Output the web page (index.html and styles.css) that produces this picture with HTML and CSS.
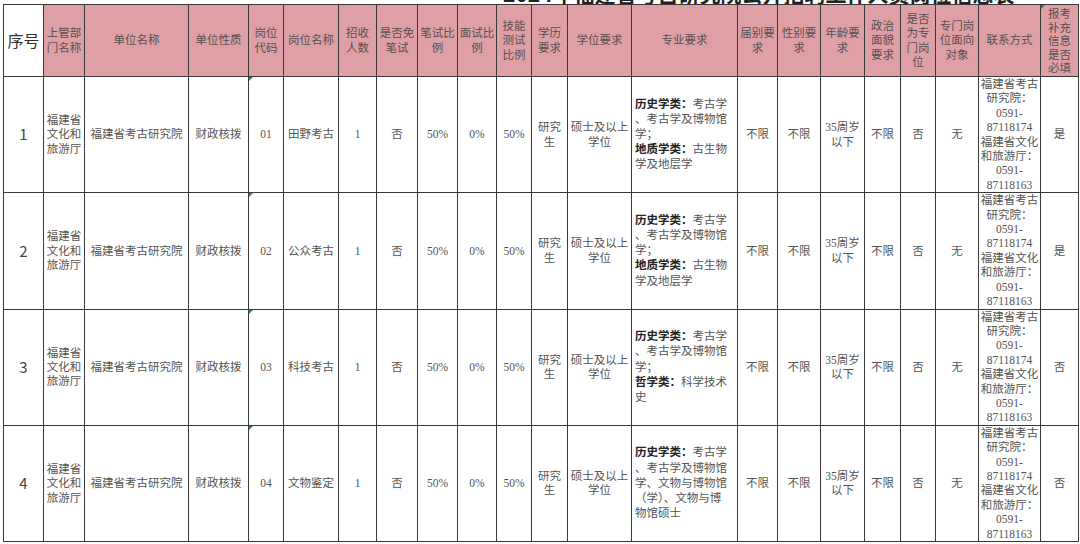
FILE: index.html
```html
<!DOCTYPE html>
<html lang="zh-CN">
<head>
<meta charset="utf-8">
<title>岗位信息表</title>
<link rel="stylesheet" href="styles.css">
</head>
<body>
<div class="sheet">
  <div class="title-strip"><div class="title">2024年福建省考古研究院公开招聘工作人员岗位信息表</div></div>
  <table class="jobs">
    <colgroup>
      <col class="c1"><col class="c2"><col class="c3"><col class="c4"><col class="c5"><col class="c6"><col class="c7"><col class="c8"><col class="c9"><col class="c10"><col class="c11"><col class="c12"><col class="c13"><col class="c14"><col class="c15"><col class="c16"><col class="c17"><col class="c18"><col class="c19"><col class="c20"><col class="c21"><col class="c22">
    </colgroup>
    <thead>
      <tr>
        <th class="idx-head">序号</th>
        <th>上管部<br>门名称</th>
        <th>单位名称</th>
        <th>单位性质</th>
        <th>岗位<br>代码</th>
        <th>岗位名称</th>
        <th>招收<br>人数</th>
        <th>是否免<br>笔试</th>
        <th>笔试比<br>例</th>
        <th>面试比<br>例</th>
        <th>技能<br>测试<br>比例</th>
        <th>学历<br>要求</th>
        <th>学位要求</th>
        <th>专业要求</th>
        <th>届别要<br>求</th>
        <th>性别要<br>求</th>
        <th>年龄要<br>求</th>
        <th>政治<br>面貌<br>要求</th>
        <th>是否<br>为专<br>门岗<br>位</th>
        <th>专门岗<br>位面向<br>对象</th>
        <th>联系方式</th>
        <th class="flag tall">报考<br>补充<br>信息<br>是否<br>必填</th>
      </tr>
    </thead>
    <tbody>
      <tr>
        <td class="idx">1</td>
        <td>福建省<br>文化和<br>旅游厅</td>
        <td>福建省考古研究院</td>
        <td>财政核拨</td>
        <td class="flag">01</td>
        <td>田野考古</td>
        <td>1</td>
        <td>否</td>
        <td>50%</td>
        <td>0%</td>
        <td>50%</td>
        <td>研究<br>生</td>
        <td>硕士及以上<br>学位</td>
        <td class="major"><b>历史学类：</b>考古学<br>、考古学及博物馆<br>学；<br><b>地质学类：</b>古生物<br>学及地层学</td>
        <td>不限</td>
        <td>不限</td>
        <td>35周岁<br>以下</td>
        <td>不限</td>
        <td>否</td>
        <td>无</td>
        <td class="contact">福建省考古<br>研究院：<br>0591-<br>87118174<br>福建省文化<br>和旅游厅：<br>0591-<br>87118163</td>
        <td>是</td>
      </tr>
      <tr>
        <td class="idx">2</td>
        <td>福建省<br>文化和<br>旅游厅</td>
        <td>福建省考古研究院</td>
        <td>财政核拨</td>
        <td class="flag">02</td>
        <td>公众考古</td>
        <td>1</td>
        <td>否</td>
        <td>50%</td>
        <td>0%</td>
        <td>50%</td>
        <td>研究<br>生</td>
        <td>硕士及以上<br>学位</td>
        <td class="major"><b>历史学类：</b>考古学<br>、考古学及博物馆<br>学；<br><b>地质学类：</b>古生物<br>学及地层学</td>
        <td>不限</td>
        <td>不限</td>
        <td>35周岁<br>以下</td>
        <td>不限</td>
        <td>否</td>
        <td>无</td>
        <td class="contact">福建省考古<br>研究院：<br>0591-<br>87118174<br>福建省文化<br>和旅游厅：<br>0591-<br>87118163</td>
        <td>是</td>
      </tr>
      <tr>
        <td class="idx">3</td>
        <td>福建省<br>文化和<br>旅游厅</td>
        <td>福建省考古研究院</td>
        <td>财政核拨</td>
        <td class="flag">03</td>
        <td>科技考古</td>
        <td>1</td>
        <td>否</td>
        <td>50%</td>
        <td>0%</td>
        <td>50%</td>
        <td>研究<br>生</td>
        <td>硕士及以上<br>学位</td>
        <td class="major"><b>历史学类：</b>考古学<br>、考古学及博物馆<br>学；<br><b>哲学类：</b>科学技术<br>史</td>
        <td>不限</td>
        <td>不限</td>
        <td>35周岁<br>以下</td>
        <td>不限</td>
        <td>否</td>
        <td>无</td>
        <td class="contact">福建省考古<br>研究院：<br>0591-<br>87118174<br>福建省文化<br>和旅游厅：<br>0591-<br>87118163</td>
        <td>否</td>
      </tr>
      <tr>
        <td class="idx">4</td>
        <td>福建省<br>文化和<br>旅游厅</td>
        <td>福建省考古研究院</td>
        <td>财政核拨</td>
        <td class="flag">04</td>
        <td>文物鉴定</td>
        <td>1</td>
        <td>否</td>
        <td>50%</td>
        <td>0%</td>
        <td>50%</td>
        <td>研究<br>生</td>
        <td>硕士及以上<br>学位</td>
        <td class="major"><b>历史学类：</b>考古学<br>、考古学及博物馆<br>学、文物与博物馆<br>（学）、文物与博<br>物馆硕士</td>
        <td>不限</td>
        <td>不限</td>
        <td>35周岁<br>以下</td>
        <td>不限</td>
        <td>否</td>
        <td>无</td>
        <td class="contact">福建省考古<br>研究院：<br>0591-<br>87118174<br>福建省文化<br>和旅游厅：<br>0591-<br>87118163</td>
        <td>否</td>
      </tr>
    </tbody>
  </table>
</div>
</body>
</html>
```

FILE: styles.css
```css
html, body {
  margin: 0;
  padding: 0;
  background: #ffffff;
}

.sheet {
  padding-left: 3px;
  width: 1075px;
}

.title-strip {
  height: 4px;
  overflow: hidden;
  padding-left: 500px;
}

.title {
  font-family: "Noto Sans CJK SC", sans-serif;
  font-weight: 700;
  font-size: 21px;
  line-height: 24px;
  margin-top: -19px;
  color: #222;
  white-space: nowrap;
}

.jobs {
  border-collapse: collapse;
  table-layout: fixed;
  width: 1075px;
  font-family: "Liberation Serif", "Noto Sans CJK SC", serif;
  font-size: 11.5px;
  line-height: 14.4px;
  color: #555;
}

.c1 { width: 40px; }
.c2 { width: 41px; }
.c3 { width: 104px; }
.c4 { width: 60px; }
.c5 { width: 35px; }
.c6 { width: 55px; }
.c7 { width: 38px; }
.c8 { width: 41px; }
.c9 { width: 40px; }
.c10 { width: 39px; }
.c11 { width: 35px; }
.c12 { width: 36px; }
.c13 { width: 64px; }
.c14 { width: 106px; }
.c15 { width: 40px; }
.c16 { width: 43px; }
.c17 { width: 44px; }
.c18 { width: 36px; }
.c19 { width: 35px; }
.c20 { width: 43px; }
.c21 { width: 62px; }
.c22 { width: 38px; }

.jobs th,
.jobs td {
  border: 1px solid #3a3a3a;
  padding: 0 1px;
  text-align: center;
  vertical-align: middle;
  white-space: nowrap;
  overflow: hidden;
  position: relative;
}

.jobs thead tr {
  height: 72px;
}

.jobs th {
  background: #dea0a5;
  font-weight: 400;
  color: #5a4f50;
  line-height: 14.5px;
}

.jobs th.tall {
  line-height: 13.6px;
  vertical-align: top;
  padding-top: 3px;
}

.jobs th.idx-head {
  background: #ffffff;
  font-family: "Noto Sans CJK SC", sans-serif;
  font-size: 16px;
  color: #333;
}

.jobs tbody tr {
  height: 116px;
}

.jobs td.idx {
  font-family: "Noto Sans CJK SC", sans-serif;
  font-size: 15px;
  color: #444;
}

.jobs td.major {
  text-align: left;
  padding-left: 3px;
  line-height: 15.2px;
}

.jobs td.major b {
  font-weight: 700;
  color: #222;
}

.jobs td.contact {
  line-height: 14.4px;
}

.flag::before {
  content: "";
  position: absolute;
  left: 0;
  top: 0;
  width: 0;
  height: 0;
  border-top: 4px solid #2e8b3a;
  border-right: 4px solid transparent;
}
```
